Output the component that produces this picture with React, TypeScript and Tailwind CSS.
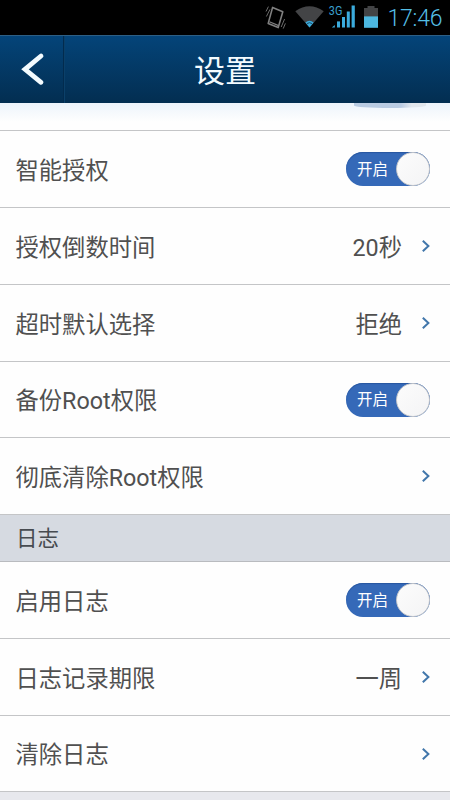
import React, { useState } from 'react';
import clsx from 'clsx';

type Row = {
  id: string;
  label: string;
  value?: string;
  toggle?: boolean;
  height: string;
};

const rootRows: Row[] = [
  { id: 'smart', label: '智能授权', toggle: true, height: 'h-[77px]' },
  { id: 'countdown', label: '授权倒数时间', value: '20秒', height: 'h-[77px]' },
  { id: 'timeout', label: '超时默认选择', value: '拒绝', height: 'h-[77px]' },
  { id: 'backup', label: '备份Root权限', toggle: true, height: 'h-[76px]' },
  { id: 'remove', label: '彻底清除Root权限', height: 'h-[77px]' },
];

const logRows: Row[] = [
  { id: 'log', label: '启用日志', toggle: true, height: 'h-[77px]' },
  { id: 'period', label: '日志记录期限', value: '一周', height: 'h-[77px]' },
  { id: 'clear', label: '清除日志', height: 'h-[76px]' },
];

const StatusBar = () => (
  <div className="h-[35px] bg-black flex items-center justify-end">
    <svg width="137" height="35" viewBox="0 0 137 35" fill="none">
      {/* vibrate */}
      <path
        d="M21.6 7.4 L31.8 11.8 L27.2 27.6 L17.2 23.4 Z"
        stroke="#808080"
        strokeWidth="1.6"
        strokeLinejoin="round"
      />
      <path d="M18.4 21.8 L27.6 25.6" stroke="#808080" strokeWidth="1.2" />
      <path
        d="M17.4 6.6 L15 11.5 M19 9.4 L15.4 16.5 M33.6 19 L30.2 27 M34.4 23.4 L32.2 28.6"
        stroke="#6c6c6c"
        strokeWidth="1"
      />
      {/* wifi */}
      <path d="M44.3 11.3 Q58.5 1.2 72.7 11.3 L58.5 27.5 Z" fill="#434446" />
      <path d="M54.4 22.6 Q58.5 18.8 62.6 22.6 L58.5 27.5 Z" fill="#3babdc" />
      <path d="M56 23.6 Q58.5 21.8 61 23.6" stroke="#123a50" strokeWidth="0.8" />
      {/* mobile signal */}
      <g fill="#3babdc">
        <path d="M80.8 27.5 L83.8 25 V27.5 Z" />
        <rect x="86" y="21.4" width="3" height="6.1" />
        <rect x="91" y="17" width="3" height="10.5" />
        <rect x="95.8" y="11.5" width="3" height="16" />
        <rect x="100.6" y="5.5" width="3.2" height="22" />
      </g>
      <text
        x="77.8"
        y="14.6"
        fontSize="12"
        fill="#3ba0d0"
        fontFamily="Roboto, sans-serif"
        textLength="13.5"
        lengthAdjust="spacingAndGlyphs"
      >
        3G
      </text>
      {/* battery */}
      <path d="M116.5 6 H123.5 V8 H127 V17 H113 V8 H116.5 Z" fill="#434446" />
      <rect x="113" y="16.4" width="14" height="11.4" fill="#4db8e0" />
    </svg>
    <span className="w-[62.5px] pt-px text-[23px] leading-none text-[#55bfe6] font-light tracking-[-0.2px] whitespace-nowrap">
      17:46
    </span>
  </div>
);

const Header = () => (
  <header className="relative h-[68px] border-t border-[#2d5f85] bg-linear-to-b from-[#044479] to-[#032e51] flex items-center justify-center">
    <button className="absolute left-0 top-0 h-full w-[65px] border-r border-[#0b4069] shadow-[inset_-1px_0_0_#022b4e]">
      <svg width="64" height="66" viewBox="0 0 64 66" fill="none">
        <path
          d="M41 19 L25 32.3 L41 45.3"
          stroke="#f3fbff"
          strokeWidth="4.8"
          strokeLinecap="round"
          strokeLinejoin="miter"
        />
      </svg>
    </button>
    <h1 className="pt-1 text-[31px] leading-none text-[#f3fbff]">设置</h1>
  </header>
);

const Toggle = ({ on, onClick }: { on: boolean; onClick: () => void }) => (
  <button
    onClick={onClick}
    className={clsx(
      'w-[84px] h-[34px] rounded-full flex items-center justify-between pl-[11px] shadow-[inset_0_1px_1px_#2857a0]',
      on ? 'bg-[#3569b8]' : 'bg-gray-400 flex-row-reverse pr-[11px] pl-0',
    )}
  >
    <span className="pt-[3px] text-[15.5px] leading-none text-white">{on ? '开启' : '关闭'}</span>
    <span className="size-[34px] rounded-full border border-[#c3c6cb] bg-linear-to-br from-[#fcfcfc] to-[#f4f4f5]" />
  </button>
);

const Chevron = () => (
  <svg width="10" height="14" viewBox="0 0 10 14" fill="none" className="mr-[-1px]">
    <path d="M1.8 1.8 L7.4 7 L1.8 12.2" stroke="#4277ab" strokeWidth="2" />
  </svg>
);

const App = () => {
  const [enabled, setEnabled] = useState<Record<string, boolean>>({
    smart: true,
    backup: true,
    log: true,
  });

  const toggle = (id: string) => setEnabled({ ...enabled, [id]: !enabled[id] });

  const renderRow = (row: Row) => (
    <div
      key={row.id}
      className={clsx(
        'flex items-center border-b border-[#c4c5c7] bg-[#fefefe] pl-[15.5px] pr-5 text-[23.3px] leading-none text-[#505050]',
        row.height,
      )}
    >
      <span className="flex-1 pt-[5px]">{row.label}</span>
      {row.toggle ? (
        <Toggle on={enabled[row.id]} onClick={() => toggle(row.id)} />
      ) : (
        <>
          {row.value && <span className="mr-[19px] pt-[5px]">{row.value}</span>}
          <Chevron />
        </>
      )}
    </div>
  );

  return (
    <div className="w-[450px] h-[800px] overflow-hidden bg-[#e7e8ed] font-['Roboto','Noto_Sans_CJK_SC',sans-serif]">
      <StatusBar />
      <Header />
      {/* bottom edge of the row scrolled under the header */}
      <div className="h-[28px] border-b border-[#c4c5c7] bg-linear-to-b from-[#edf4fb] to-[#fefefe] to-70% flex justify-end pr-6">
        <div className="w-[72px] h-[5px] rounded-b-[50%] bg-linear-to-r from-[#b9cbe2] from-65% to-[#e2e7ed] to-80%" />
      </div>
      {rootRows.map(renderRow)}
      <div className="h-[47px] border-b border-[#b9bbbf] bg-[#d6dae1] flex items-center pt-[2px] pl-4 text-[21.5px] leading-none text-[#474b50]">
        日志
      </div>
      {logRows.map(renderRow)}
    </div>
  );
};

export default App;
